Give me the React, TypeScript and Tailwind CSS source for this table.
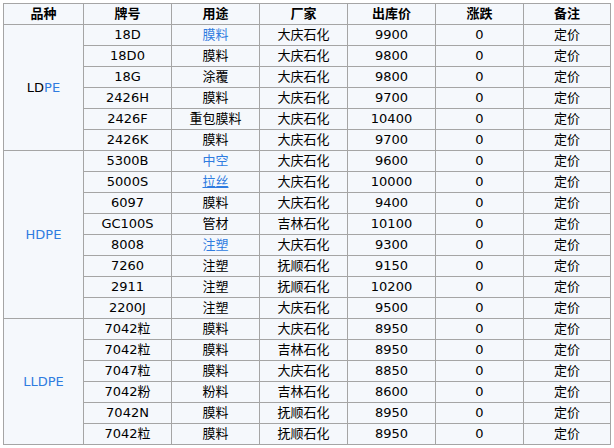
import React from "react";

type Row = { code: string; use: string; useBlue?: boolean; useUnderline?: boolean; maker: string; price: string };

const groups: { name: React.ReactNode; rows: Row[] }[] = [
  {
    name: (
      <>
        <span className="text-black">LD</span>
        <span className="text-[#2f7ce0]">PE</span>
      </>
    ),
    rows: [
      { code: "18D", use: "膜料", useBlue: true, maker: "大庆石化", price: "9900" },
      { code: "18D0", use: "膜料", maker: "大庆石化", price: "9800" },
      { code: "18G", use: "涂覆", maker: "大庆石化", price: "9800" },
      { code: "2426H", use: "膜料", maker: "大庆石化", price: "9700" },
      { code: "2426F", use: "重包膜料", maker: "大庆石化", price: "10400" },
      { code: "2426K", use: "膜料", maker: "大庆石化", price: "9700" },
    ],
  },
  {
    name: <span className="text-[#2f7ce0]">HDPE</span>,
    rows: [
      { code: "5300B", use: "中空", useBlue: true, maker: "大庆石化", price: "9600" },
      { code: "5000S", use: "拉丝", useBlue: true, useUnderline: true, maker: "大庆石化", price: "10000" },
      { code: "6097", use: "膜料", maker: "大庆石化", price: "9400" },
      { code: "GC100S", use: "管材", maker: "吉林石化", price: "10100" },
      { code: "8008", use: "注塑", useBlue: true, maker: "大庆石化", price: "9300" },
      { code: "7260", use: "注塑", maker: "抚顺石化", price: "9150" },
      { code: "2911", use: "注塑", maker: "抚顺石化", price: "10200" },
      { code: "2200J", use: "注塑", maker: "大庆石化", price: "9500" },
    ],
  },
  {
    name: <span className="text-[#2f7ce0]">LLDPE</span>,
    rows: [
      { code: "7042粒", use: "膜料", maker: "大庆石化", price: "8950" },
      { code: "7042粒", use: "膜料", maker: "吉林石化", price: "8950" },
      { code: "7047粒", use: "膜料", maker: "大庆石化", price: "8850" },
      { code: "7042粉", use: "粉料", maker: "吉林石化", price: "8600" },
      { code: "7042N", use: "膜料", maker: "抚顺石化", price: "8950" },
      { code: "7042粒", use: "膜料", maker: "抚顺石化", price: "8950" },
    ],
  },
];

const cell = "border border-[#a5a5a5] p-0 text-center align-middle leading-[20px]";

export default function App() {
  return (
    <div className="w-[614px] h-[448px] bg-white pt-[3px] pl-[3px]" style={{ fontFamily: '"DejaVu Sans", "Noto Sans CJK SC", sans-serif' }}>
      <table className="border-collapse table-fixed w-[607px] bg-[#f5f8fc] text-[13px] text-black">
        <colgroup>
          <col className="w-[80px]" />
          <col className="w-[88px]" />
          <col className="w-[88px]" />
          <col className="w-[88px]" />
          <col className="w-[88px]" />
          <col className="w-[88px]" />
          <col className="w-[87px]" />
        </colgroup>
        <thead>
          <tr className="h-[21px]">
            {["品种", "牌号", "用途", "厂家", "出库价", "涨跌", "备注"].map((h) => (
              <th key={h} className={`${cell} font-bold`}>{h}</th>
            ))}
          </tr>
        </thead>
        <tbody>
          {groups.map((g, gi) =>
            g.rows.map((r, ri) => (
              <tr key={`${gi}-${ri}`} className="h-[21px]">
                {ri === 0 && (
                  <td rowSpan={g.rows.length} className={cell}>
                    {g.name}
                  </td>
                )}
                <td className={cell}>{r.code}</td>
                <td className={cell}>
                  <span className={`${r.useBlue ? "text-[#2f7ce0]" : ""} ${r.useUnderline ? "underline" : ""}`}>{r.use}</span>
                </td>
                <td className={cell}>{r.maker}</td>
                <td className={cell}>{r.price}</td>
                <td className={cell}>0</td>
                <td className={cell}>定价</td>
              </tr>
            ))
          )}
        </tbody>
      </table>
    </div>
  );
}
